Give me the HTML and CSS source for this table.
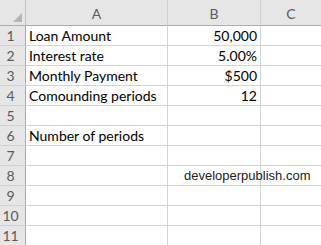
FILE: index.html
```html
<!DOCTYPE html>
<html>
<head>
<meta charset="utf-8">
<link rel="stylesheet" href="styles.css">
</head>
<body>
<div class="sheet">
  <div class="corner"><span class="tri"></span></div>
  <div class="colh">A</div>
  <div class="colh">B</div>
  <div class="colh last">C</div>

  <div class="rowh">1</div><div class="cell">Loan Amount</div><div class="cell num">50,000</div><div class="cell"></div>
  <div class="rowh">2</div><div class="cell">Interest rate</div><div class="cell num">5.00%</div><div class="cell"></div>
  <div class="rowh">3</div><div class="cell">Monthly Payment</div><div class="cell num">$500</div><div class="cell"></div>
  <div class="rowh">4</div><div class="cell">Comounding periods</div><div class="cell num">12</div><div class="cell"></div>
  <div class="rowh">5</div><div class="cell"></div><div class="cell"></div><div class="cell"></div>
  <div class="rowh">6</div><div class="cell">Number of periods</div><div class="cell"></div><div class="cell"></div>
  <div class="rowh">7</div><div class="cell"></div><div class="cell"></div><div class="cell"></div>
  <div class="rowh">8</div><div class="cell"></div><div class="cell over"><span class="site">developerpublish.com</span></div><div class="cell"></div>
  <div class="rowh">9</div><div class="cell"></div><div class="cell"></div><div class="cell"></div>
  <div class="rowh">10</div><div class="cell"></div><div class="cell"></div><div class="cell"></div>
  <div class="rowh">11</div><div class="cell"></div><div class="cell"></div><div class="cell"></div>
</div>
</body>
</html>
```
FILE: styles.css
```css
html, body {
  margin: 0;
  padding: 0;
  background: #ffffff;
  overflow: hidden;
}
.sheet {
  display: grid;
  grid-template-columns: 26px 142px 93px 61px;
  grid-template-rows: 26px repeat(11, 20px);
  width: 322px;
}
.corner {
  background: #e6e6e6;
  border-right: 1px solid #c4c4c4;
  border-bottom: 1px solid #ababab;
  position: relative;
}
.tri {
  position: absolute;
  right: 3px;
  bottom: 3px;
  width: 0;
  height: 0;
  border-left: 9px solid transparent;
  border-bottom: 9px solid #b4b4b4;
}
.colh {
  background: #e6e6e6;
  border-right: 1px solid #d0d0d0;
  border-bottom: 1px solid #ababab;
  color: #5a5a5a;
  font-family: "Lato", "Liberation Sans", sans-serif;
  font-size: 14px;
  display: flex;
  align-items: center;
  justify-content: center;
  padding-top: 2px;
  box-sizing: border-box;
}
.rowh {
  background: #e6e6e6;
  border-right: 1px solid #ababab;
  border-bottom: 1px solid #d0d0d0;
  color: #5a5a5a;
  font-family: "Lato", "Liberation Sans", sans-serif;
  font-size: 14px;
  display: flex;
  align-items: flex-end;
  justify-content: center;
  padding-right: 4px;
  padding-bottom: 1px;
  box-sizing: border-box;
  line-height: 16px;
}
.cell {
  border-right: 1px solid #d4d4d4;
  border-bottom: 1px solid #d4d4d4;
  font-family: "Lato", "Liberation Sans", sans-serif;
  font-size: 14px;
  color: #000000;
  display: flex;
  align-items: flex-end;
  padding: 0 3px 1px 3px;
  box-sizing: border-box;
  white-space: nowrap;
  line-height: 17px;
  min-width: 0;
}
.num {
  justify-content: flex-end;
}
.over {
  position: relative;
}
.site {
  position: absolute;
  left: 16px;
  bottom: 2px;
  font-family: "Liberation Sans", Arial, sans-serif;
  font-size: 13px;
  color: #222222;
  line-height: 15px;
}
```
